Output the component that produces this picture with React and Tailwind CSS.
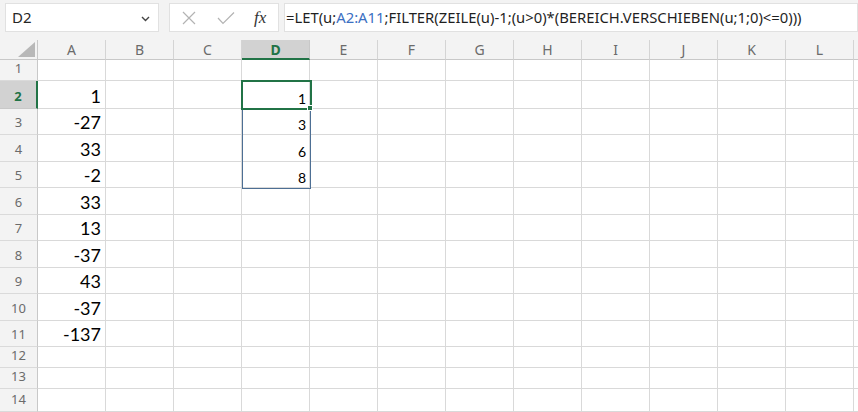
import React from 'react';

const COLS = ['A', 'B', 'C', 'D', 'E', 'F', 'G', 'H', 'I', 'J', 'K', 'L', ''];
const ROW_HEIGHTS = [21, 28, 26, 27, 26, 27, 26, 27, 26, 27, 26, 21, 21, 23];

const colA = { 2: '1', 3: '-27', 4: '33', 5: '-2', 6: '33', 7: '13', 8: '-37', 9: '43', 10: '-37', 11: '-137' };
const colD = { 2: '1', 3: '3', 4: '6', 5: '8' };

const uiFont = { fontFamily: '"Noto Sans", "Open Sans", sans-serif' };
const cellFont = { fontFamily: 'Lato, "Noto Sans", sans-serif' };

const FormulaBar = () => (
  <div className="flex h-[40px] items-start bg-[#f3f3f3] pt-[3px]" style={uiFont}>
    <div className="ml-[5px] flex h-[29px] w-[154px] items-center justify-between border border-[#e1e1e1] bg-white pl-[6px] pr-[8px]">
      <span className="text-[15px] text-[#262626]">D2</span>
      <svg width="9" height="6" viewBox="0 0 9 6" className="mt-[2px]">
        <path d="M1 1 L4.5 4.5 L8 1" fill="none" stroke="#444" strokeWidth="1.4" />
      </svg>
    </div>
    <div className="ml-[10px] flex h-[29px] w-[110px] items-center border border-[#e1e1e1] bg-white">
      <svg width="16" height="16" viewBox="0 0 16 16" className="ml-[11px]">
        <path d="M2 2 L14 14 M14 2 L2 14" stroke="#b3b3b3" strokeWidth="1.2" />
      </svg>
      <svg width="18" height="14" viewBox="0 0 18 14" className="ml-[20px]">
        <path d="M1 7 L6 12.5 L17 1.5" fill="none" stroke="#b3b3b3" strokeWidth="1.2" />
      </svg>
      <span className="ml-[19px] text-[17px] italic text-[#333]" style={{ fontFamily: '"Liberation Serif", serif' }}>
        fx
      </span>
    </div>
    <div className="ml-[5px] flex h-[29px] flex-1 items-center overflow-hidden whitespace-nowrap border border-[#e1e1e1] bg-white pl-[1px]">
      <span className="text-[14.8px] text-[#1f1f1f]">
        =LET(u;<span className="text-[#3b6fc2]">A2:A11</span>;FILTER(ZEILE(u)-1;(u&gt;0)*(BEREICH.VERSCHIEBEN(u;1;0)&lt;=0)))
      </span>
    </div>
  </div>
);

const Corner = () => (
  <div className="relative h-[20px] w-[38px] shrink-0 border-b border-r border-[#c8c8c8] bg-[#f3f3f3]">
    <svg width="17" height="15" viewBox="0 0 17 15" className="absolute bottom-[2px] right-[2px]">
      <path d="M17 0 L17 15 L0 15 Z" fill="#b8b8b8" />
    </svg>
  </div>
);

const App = () => {
  return (
    <div className="h-[412px] w-[858px] overflow-hidden bg-white">
      <FormulaBar />
      <div className="relative">
        {/* column header */}
        <div className="flex">
          <Corner />
          {COLS.map((c, ci) => {
            const active = c === 'D';
            return (
              <div
                key={ci}
                className={
                  active
                    ? 'flex h-[20px] w-[68px] shrink-0 items-center justify-center border-b-2 border-r border-b-[#217346] border-r-[#c8c8c8] bg-[#d2d2d2] text-[14px] font-bold text-[#217346]'
                    : 'flex h-[20px] w-[68px] shrink-0 items-center justify-center border-b border-r border-[#d4d4d4] border-b-[#c8c8c8] bg-[#f3f3f3] text-[14px] text-[#6b6b6b]'
                }
                style={uiFont}
              >
                {c}
              </div>
            );
          })}
        </div>

        {ROW_HEIGHTS.map((h, i) => {
          const r = i + 1;
          const active = r === 2;
          return (
            <div key={r} className="flex" style={{ height: h }}>
              <div
                className={
                  active
                    ? 'flex w-[38px] shrink-0 items-end justify-center border-b border-r-2 border-b-[#c8c8c8] border-r-[#217346] bg-[#d2d2d2] pb-[2px] text-[13px] font-bold text-[#217346]'
                    : 'flex w-[38px] shrink-0 items-end justify-center border-b border-r border-b-[#dadada] border-r-[#c8c8c8] bg-[#f3f3f3] pb-[2px] text-[13px] text-[#6b6b6b]'
                }
                style={uiFont}
              >
                {r}
              </div>
              {COLS.map((c, ci) => {
                let val = null;
                let big = false;
                if (c === 'A' && colA[r]) {
                  val = colA[r];
                  big = true;
                }
                if (c === 'D' && colD[r]) val = colD[r];
                return (
                  <div
                    key={ci}
                    className={
                      big
                        ? 'flex w-[68px] shrink-0 items-end justify-end border-b border-r border-[#d9d9d9] pb-[3px] pr-[4px] text-[18px] leading-none text-black'
                        : 'flex w-[68px] shrink-0 items-end justify-end border-b border-r border-[#d9d9d9] pb-[2px] pr-[3px] text-[14px] leading-none text-black'
                    }
                    style={cellFont}
                  >
                    {val}
                  </div>
                );
              })}
            </div>
          );
        })}

        {/* spill range D2:D5 */}
        <div className="pointer-events-none absolute left-[242px] top-[41px] h-[108px] w-[69px] border border-[#4d6f94]" />
        {/* active cell D2 */}
        <div className="pointer-events-none absolute left-[241px] top-[40px] h-[30px] w-[71px] border-2 border-[#217346]" />
        <div className="pointer-events-none absolute left-[307px] top-[65px] h-[6px] w-[6px] border border-white bg-[#217346]" />
      </div>
    </div>
  );
};

export default App;
